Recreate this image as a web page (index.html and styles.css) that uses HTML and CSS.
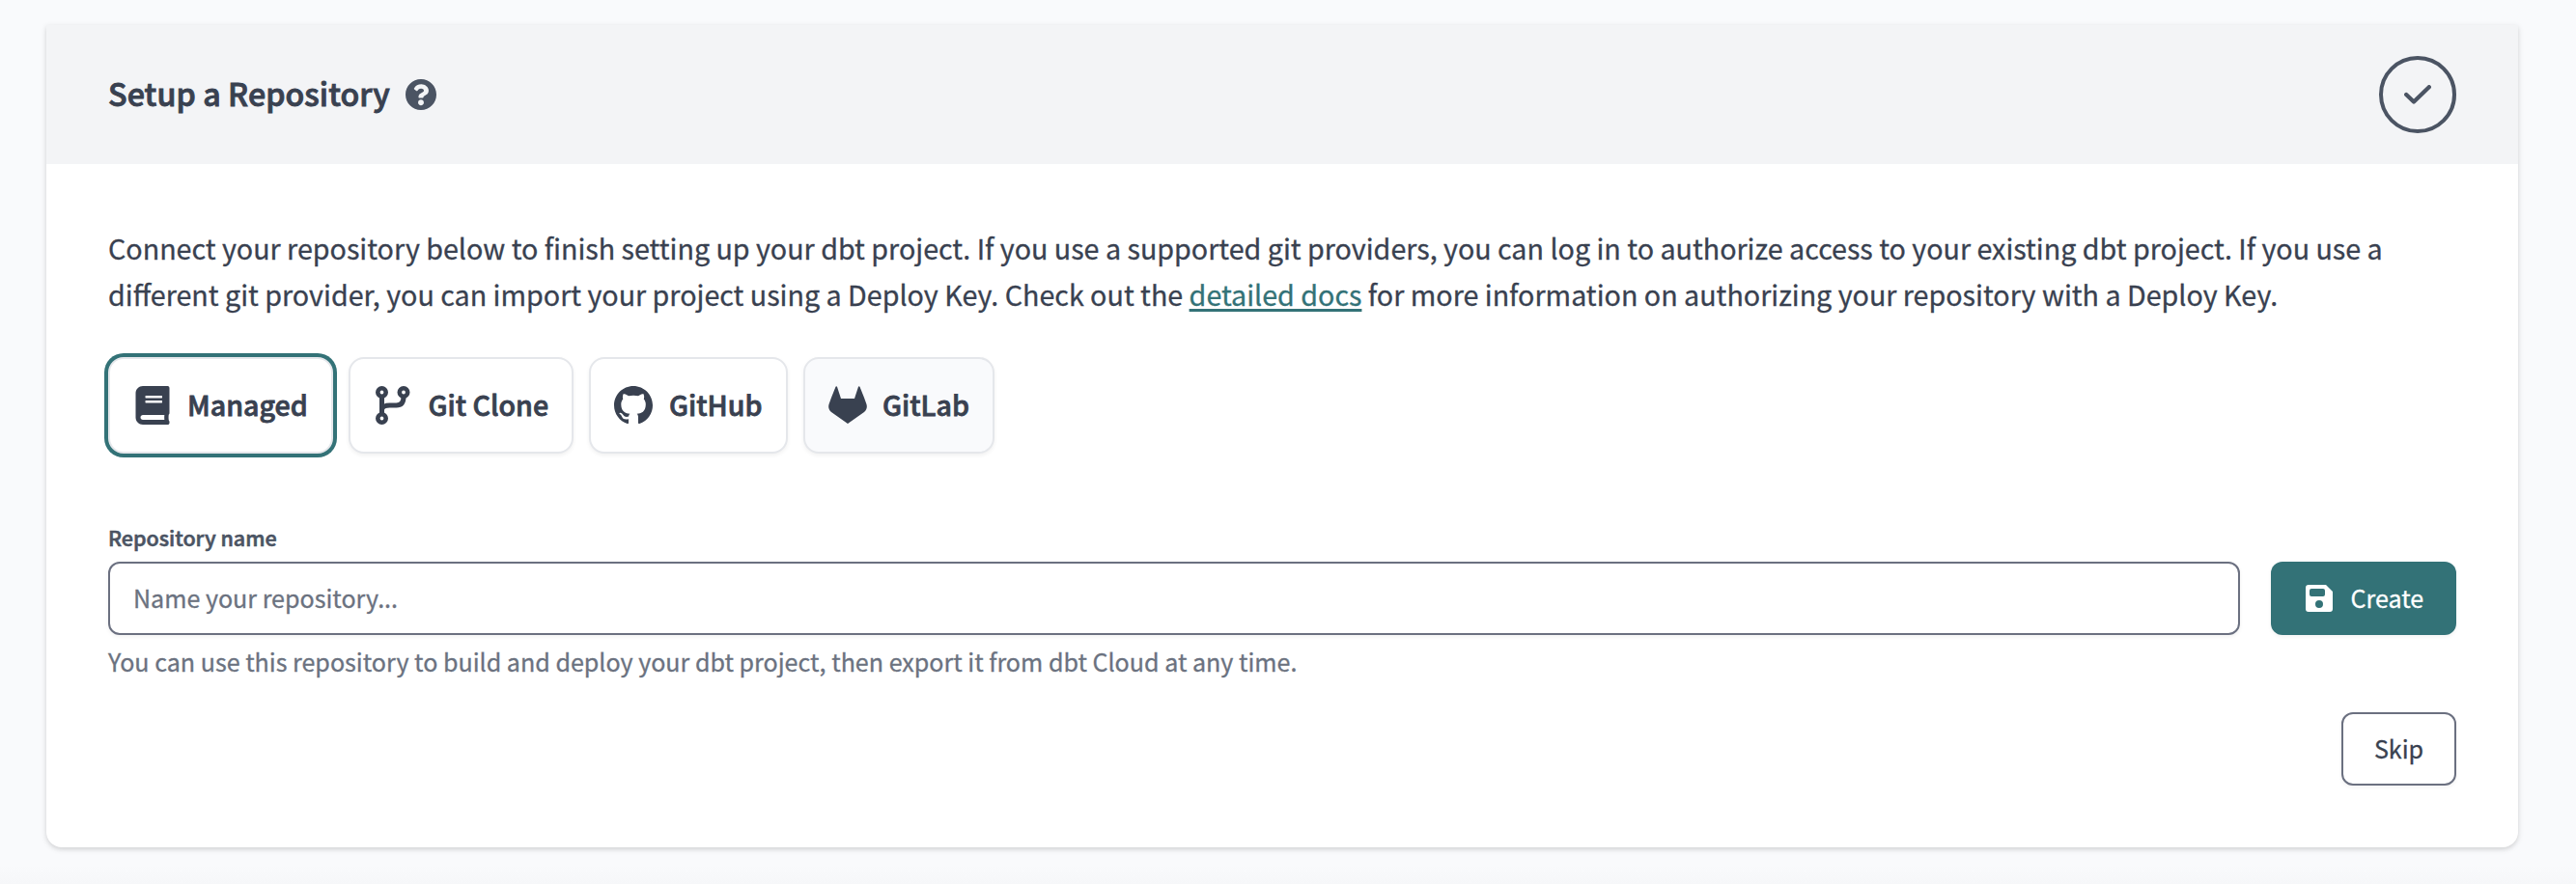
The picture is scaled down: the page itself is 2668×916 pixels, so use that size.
FILE: index.html
```html
<!DOCTYPE html>
<html lang="en">
<head>
<meta charset="utf-8">
<title>Setup a Repository</title>
<link rel="stylesheet" href="styles.css">
</head>
<body>
<main class="card">
  <header class="card-header">
    <h1 class="title">Setup a Repository</h1>
    <svg class="help-icon" viewBox="8 8 496 496"><path fill="currentColor" d="M504 256c0 136.997-111.043 248-248 248S8 392.997 8 256C8 119.083 119.043 8 256 8s248 111.083 248 248zM262.655 90c-54.497 0-89.255 22.957-116.549 63.758-3.536 5.286-2.353 12.415 2.715 16.258l34.699 26.31c5.205 3.947 12.621 3.008 16.665-2.122 17.864-22.658 30.113-35.797 57.303-35.797 20.429 0 45.698 13.148 45.698 32.958 0 14.976-12.363 22.667-32.534 33.976C247.128 238.528 216 254.941 216 296v4c0 6.627 5.373 12 12 12h56c6.627 0 12-5.373 12-12v-1.333c0-28.462 83.186-29.647 83.186-106.667 0-58.002-60.165-102-116.531-102zM256 338c-25.365 0-46 20.635-46 46 0 25.364 20.635 46 46 46s46-20.636 46-46c0-25.365-20.635-46-46-46z"/></svg>
    <span class="status"><svg class="check-icon" viewBox="0 0 28 20"><path d="M2.2 10 10 17.5 25.8 2.2" fill="none" stroke="currentColor" stroke-width="4.3" stroke-linecap="round" stroke-linejoin="round"/></svg></span>
  </header>
  <div class="card-body">
    <p class="intro"><span class="line line-first">Connect your repository below to finish setting up your dbt project. If you use a supported git providers, you can log in to authorize access to your existing dbt project. If you use a</span> <span class="line line-second">different git provider, you can import your project using a Deploy Key. Check out the <a class="link" href="#">detailed docs</a> for more information on authorizing your repository with a Deploy Key.</span></p>
    <div class="providers">
      <button class="provider managed selected"><svg class="icon book" viewBox="0 0 448 512"><path fill="currentColor" d="M448 360V24c0-13.300-10.700-24-24-24H96C43 0 0 43 0 96v320c0 53 43 96 96 96h328c13.300 0 24-10.700 24-24v-16c0-7.500-3.500-14.300-8.900-18.700-4.200-15.400-4.200-59.300 0-74.700 5.400-4.300 8.900-11.100 8.900-18.600zM128 134c0-3.300 2.700-6 6-6h212c3.300 0 6 2.700 6 6v20c0 3.300-2.700 6-6 6H134c-3.300 0-6-2.700-6-6v-20zm0 64c0-3.300 2.700-6 6-6h212c3.300 0 6 2.700 6 6v20c0 3.300-2.700 6-6 6H134c-3.300 0-6-2.700-6-6v-20zm253.400 250H96c-17.700 0-32-14.300-32-32 0-17.600 14.400-32 32-32h285.400c-1.900 17.100-1.900 46.900 0 64z"/></svg><span class="label">Managed</span></button>
      <button class="provider clone"><svg class="icon branch" viewBox="0 0 36 40"><g fill="none" stroke="currentColor"><circle cx="6.500" cy="6.500" r="4.200" stroke-width="4.600"/><circle cx="29" cy="6.500" r="4.200" stroke-width="4.600"/><circle cx="6.500" cy="33.500" r="4.200" stroke-width="4.600"/><path d="M6.500 11v18M6.500 24c1.500-3.700 4.500-4 8-4h7c5 0 7.500-3 7.500-9" stroke-width="5"/></g></svg><span class="label">Git Clone</span></button>
      <button class="provider github"><svg class="icon octocat" viewBox="0 0 16 16"><path fill="currentColor" d="M8 0C3.580 0 0 3.580 0 8c0 3.540 2.290 6.530 5.470 7.590.4.070.55-.17.55-.38 0-.19-.01-.82-.01-1.490-2.010.37-2.530-.49-2.690-.94-.09-.23-.48-.94-.82-1.130-.28-.15-.68-.52-.01-.53.63-.01 1.080.58 1.230.82.72 1.210 1.870.87 2.330.66.07-.52.28-.87.51-1.070-1.780-.2-3.640-.89-3.640-3.950 0-.87.31-1.590.82-2.150-.08-.2-.36-1.020.08-2.120 0 0 .67-.21 2.200.82.64-.18 1.320-.27 2-.27s1.360.09 2 .27c1.530-1.040 2.200-.82 2.200-.82.44 1.100.16 1.920.08 2.120.51.56.82 1.270.82 2.150 0 3.070-1.870 3.750-3.650 3.950.29.25.54.73.54 1.480 0 1.070-.01 1.930-.01 2.200 0 .21.15.46.55.38A8.010 8.010 0 0 0 16 8c0-4.420-3.580-8-8-8z"/></svg><span class="label">GitHub</span></button>
      <button class="provider gitlab"><svg class="icon fox" viewBox="0 0 40 40"><path fill="currentColor" d="M7.500.8c.3-.8 1.200-.8 1.500 0L13 13h14L31 .8c.3-.8 1.200-.8 1.500 0L37 12l2.500 7c.8 2.800.2 6-2.500 8L20 39 3 27C.3 25-.3 21.800.5 19L3 12z"/></svg><span class="label">GitLab</span></button>
    </div>
    <label class="field-label" for="repo">Repository name</label>
    <div class="field-row">
      <input class="field" id="repo" placeholder="Name your repository...">
      <button class="create"><svg class="save-icon" viewBox="0 0 28 28"><path fill="currentColor" fill-rule="evenodd" d="M3 0h18l7 7v18a3 3 0 0 1-3 3H3a3 3 0 0 1-3-3V3a3 3 0 0 1 3-3zM6 4a2 2 0 0 0-2 2v4a2 2 0 0 0 2 2h12a2 2 0 0 0 2-2V6a2 2 0 0 0-2-2zM14 16a4 4 0 1 0 0 8 4 4 0 0 0 0-8z"/></svg><span class="label">Create</span></button>
    </div>
    <p class="hint">You can use this repository to build and deploy your dbt project, then export it from dbt Cloud at any time.</p>
    <div class="actions"><button class="skip">Skip</button></div>
  </div>
</main>
</body>
</html>
```

FILE: styles.css
```css
* { box-sizing: border-box; }
body { margin: 0; padding: 26px 60px 38px 48px; height: 916px; overflow: hidden; background: linear-gradient(#f9fafc 0, #f9fafc 896px, #f6f7f9 916px); font-family: "Noto Sans CJK SC", sans-serif; color: #394150; -webkit-text-stroke: .3px currentColor; }
button, input { font: inherit; color: inherit; margin: 0; -webkit-text-stroke: inherit; }
.card { height: 852px; background: #fff; border-radius: 0 0 16px 16px; box-shadow: 0 2px 6px rgba(0,0,0,.12), 0 2px 4px rgba(0,0,0,.06); }
.card-header { height: 144px; padding: 0 64px; display: flex; align-items: center; background: #f3f4f6; }
.title { margin: 0; padding-bottom: 4px; font-size: 32.200px; line-height: 48px; font-weight: 500; letter-spacing: .08px; white-space: nowrap; -webkit-text-stroke: .9px currentColor; }
.help-icon { width: 32px; height: 32px; margin-left: 16px; color: #4b5463; }
.status { width: 80px; height: 80px; margin-left: auto; border: 4px solid #4b5463; border-radius: 50%; display: flex; align-items: center; justify-content: center; color: #4b5463; }
.check-icon { width: 28px; height: 20px; }
.card-body { padding: 63px 64px 0; }
.intro { margin: 0; font-size: 28.660px; line-height: 48px; }
.line { display: block; width: max-content; white-space: nowrap; }
.link { color: #337277; text-decoration: underline; text-decoration-thickness: 3px; text-underline-offset: 3px; }
.providers { margin-top: 41px; display: flex; gap: 16px; }
.provider { height: 100px; padding: 0; border: 2px solid #e5e7eb; border-radius: 16px; background: #fff; box-shadow: 0 2px 4px rgba(0,0,0,.06); display: flex; align-items: center; font-size: 28.600px; font-weight: 500; white-space: nowrap; -webkit-text-stroke: .8px currentColor; }
.provider .label { padding-bottom: 3px; }
.selected { box-shadow: 0 0 0 4px #337277; }
.managed { width: 233px; padding-left: 26px; gap: 18px; }
.clone { width: 233px; padding-left: 26px; gap: 18.500px; }
.github { width: 206px; padding-left: 24px; gap: 17px; }
.gitlab { width: 198px; padding-left: 24px; gap: 16px; background: #f9fafc; }
.icon { height: 40px; flex: none; }
.book, .branch { width: 36px; }
.octocat, .fox { width: 40px; }
.field-label { display: block; margin-top: 67px; height: 40px; line-height: 40px; font-size: 21.500px; font-weight: 500; color: #4b5463; -webkit-text-stroke: .6px currentColor; }
.field-row { margin-top: 5px; display: flex; gap: 32px; }
.field { flex: 1; height: 76px; padding: 0 24px 2px; border: 2px solid #6b7080; border-radius: 12px; background: #fff; font-size: 25.070px; box-shadow: 0 2px 4px rgba(0,0,0,.05); }
.field::placeholder { color: #6b7280; opacity: 1; }
.create { width: 192px; height: 76px; padding: 0 0 0 36px; border: 0; border-radius: 12px; background: #337277; color: #fff; display: flex; align-items: center; gap: 18.500px; font-size: 25.070px; box-shadow: 0 2px 4px rgba(0,0,0,.05); }
.create .label { padding-bottom: 2px; }
.save-icon { width: 28px; height: 28px; }
.hint { margin: 7px 0 0; font-size: 25.070px; line-height: 40px; color: #6b7280; white-space: nowrap; }
.actions { display: flex; justify-content: flex-end; margin-top: 33px; }
.skip { width: 119px; height: 76px; padding: 0 0 2px; border: 2px solid #6b7080; border-radius: 12px; background: #fff; font-size: 25.070px; box-shadow: 0 2px 4px rgba(0,0,0,.05); }
```
